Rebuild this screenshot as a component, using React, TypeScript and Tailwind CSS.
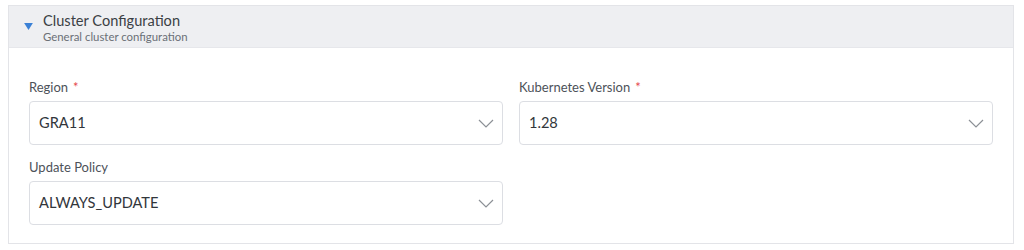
type FieldProps = {
  label: string;
  value: string;
  required?: boolean;
};

function SelectField({ label, value, required }: FieldProps) {
  return (
    <div className="flex flex-col">
      <label className="h-[16px] text-[13px] leading-[16px] text-[#4d5259] mb-[6px]">
        {label}
        {required && <span className="ml-[5px] text-[#e5484d]">*</span>}
      </label>
      <div className="flex h-[44px] items-center justify-between rounded-[4px] border border-[#dcdee3] bg-white pl-[9px] pr-[8px]">
        <span className="text-[14.6px] text-[#32363b]">{value}</span>
        <svg viewBox="0 0 16 9" className="h-[9px] w-[16px]">
          <polyline points="1,1 8,8 15,1" fill="none" stroke="#8c9096" strokeWidth="1.2" />
        </svg>
      </div>
    </div>
  );
}

export default function App() {
  return (
    <div className="h-[250px] w-[1024px] bg-white pt-[5px] pl-[8px] font-['Lato','Liberation_Sans',sans-serif]">
      <div className="w-[1006px] border border-[#e3e4e8] bg-white">
        <div className="flex h-[42px] items-start border-b border-[#e6e7eb] bg-[#eeeff2] pl-[15px]">
          <svg viewBox="0 0 10 8" className="mt-[17px] h-[7px] w-[9px]">
            <polygon points="0,0 10,0 5,8" fill="#3a80d6" />
          </svg>
          <div className="ml-[10px] mt-[6px] flex flex-col">
            <span className="text-[14.6px] leading-[18px] text-[#3b3f45]">Cluster Configuration</span>
            <span className="text-[11.4px] leading-[13px] text-[#6b7077]">General cluster configuration</span>
          </div>
        </div>
        <div className="grid grid-cols-2 gap-x-[16px] gap-y-[14px] px-[20px] pt-[31px] pb-[18px]">
          <SelectField label="Region" value="GRA11" required />
          <SelectField label="Kubernetes Version" value="1.28" required />
          <SelectField label="Update Policy" value="ALWAYS_UPDATE" />
        </div>
      </div>
    </div>
  );
}
